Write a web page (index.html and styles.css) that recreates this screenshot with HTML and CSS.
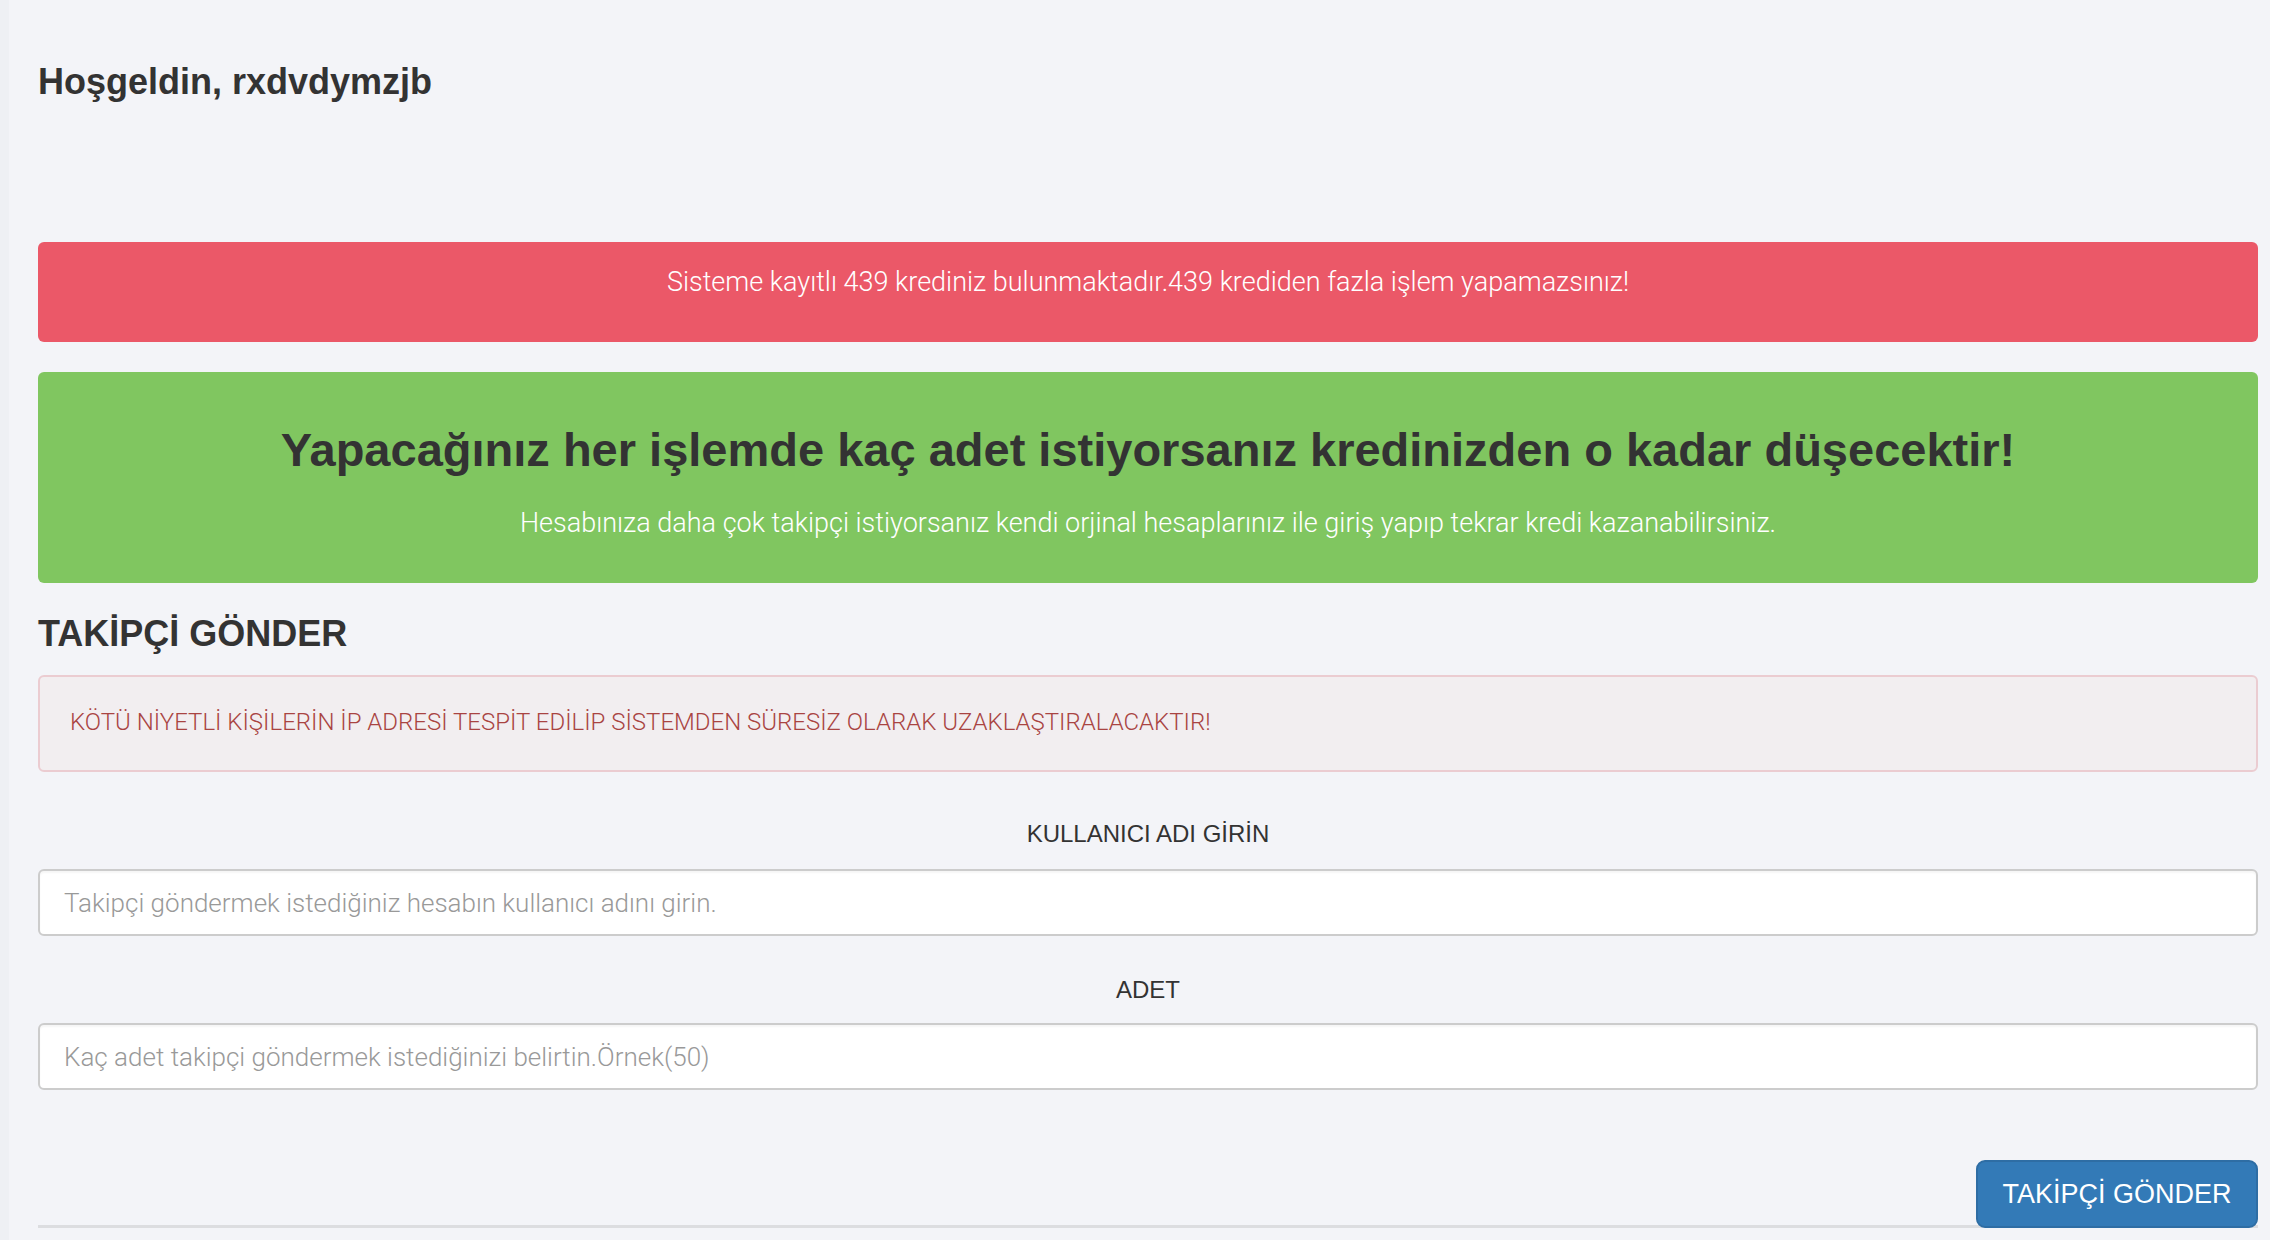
FILE: index.html
```html
<!DOCTYPE html>
<html lang="tr">
<head>
<meta charset="utf-8">
<title>Takipçi Gönder</title>
<link rel="stylesheet" href="styles.css">
</head>
<body>
<div class="page">
  <h3 class="welcome">Hoşgeldin, rxdvdymzjb</h3>

  <div class="alert alert-red">
    <p>Sisteme kayıtlı 439 krediniz bulunmaktadır.439 krediden fazla işlem yapamazsınız!</p>
  </div>

  <div class="alert alert-green">
    <h2 class="green-title">Yapacağınız her işlemde kaç adet istiyorsanız kredinizden o kadar düşecektir!</h2>
    <p class="green-sub">Hesabınıza daha çok takipçi istiyorsanız kendi orjinal hesaplarınız ile giriş yapıp tekrar kredi kazanabilirsiniz.</p>
  </div>

  <h3 class="section-title">TAKİPÇİ GÖNDER</h3>

  <div class="alert alert-pink">KÖTÜ NİYETLİ KİŞİLERİN İP ADRESİ TESPİT EDİLİP SİSTEMDEN SÜRESİZ OLARAK UZAKLAŞTIRALACAKTIR!</div>

  <form class="send-form">
    <div class="field">
      <label class="field-label" for="u">KULLANICI ADI GİRİN</label>
      <input class="field-input" id="u" type="text" placeholder="Takipçi göndermek istediğiniz hesabın kullanıcı adını girin.">
    </div>
    <div class="field">
      <label class="field-label" for="a">ADET</label>
      <input class="field-input" id="a" type="text" placeholder="Kaç adet takipçi göndermek istediğinizi belirtin.Örnek(50)">
    </div>
    <div class="actions">
      <button class="btn-send" type="button">TAKİPÇİ GÖNDER</button>
    </div>
  </form>
</div>
</body>
</html>
```

FILE: styles.css
```css
* { box-sizing: border-box; }
html, body {
  margin: 0;
  padding: 0;
  background: #f3f4f8;
}
body {
  font-family: "Roboto", "Liberation Sans", Arial, sans-serif;
  font-weight: 300;
  color: #333;
  font-size: 27px;
  border-left: 9px solid #eef0f4;
  min-height: 1240px;
}
.page {
  padding: 62px 12px 0 29px;
}
.welcome {
  margin: 0;
  font-family: "Liberation Sans", Arial, sans-serif;
  font-weight: 700;
  font-size: 36px;
  line-height: 40px;
  color: #333;
}
.alert {
  border-radius: 6px;
}
.alert-red {
  margin-top: 140px;
  height: 100px;
  background: #eb5868;
  color: #fff;
  text-align: center;
  padding-top: 25px;
}
.alert-red p {
  margin: 0;
  line-height: 30px;
}
.alert-green {
  margin-top: 30px;
  height: 211px;
  background: #80c660;
  text-align: center;
  padding-top: 50px;
}
.green-title {
  margin: 0;
  font-family: "Liberation Sans", Arial, sans-serif;
  font-weight: 700;
  font-size: 47px;
  line-height: 56px;
  color: #333;
}
.green-sub {
  margin: 30px 0 0;
  line-height: 30px;
  color: #fff;
}
.section-title {
  margin: 31px 0 0;
  font-family: "Liberation Sans", Arial, sans-serif;
  font-weight: 700;
  font-size: 36px;
  line-height: 40px;
  color: #333;
}
.alert-pink {
  margin-top: 21px;
  height: 97px;
  background: #f2eef0;
  border: 2px solid #ebccd1;
  color: #a94442;
  padding: 30px 0 0 30px;
  font-size: 24px;
  line-height: 30px;
}
.send-form {
  margin: 0;
}
.field {
  display: flex;
  flex-direction: column;
}
.field-label {
  text-align: center;
  font-family: "Liberation Sans", Arial, sans-serif;
  font-weight: 400;
  font-size: 24px;
  line-height: 30px;
  color: #333;
  margin-top: 47px;
  margin-bottom: 20px;
}
.field + .field .field-label {
  margin-top: 39px;
  margin-bottom: 18px;
}
.field-input {
  height: 67px;
  width: 100%;
  border: 2px solid #ccc;
  border-radius: 6px;
  background: #fff;
  padding: 0 24px;
  font-family: inherit;
  font-weight: 300;
  font-size: 26px;
  color: #555;
  box-shadow: inset 0 2px 2px rgba(0,0,0,0.04);
}
.field-input::placeholder {
  color: #999;
}
.actions {
  margin-top: 70px;
  display: flex;
  justify-content: flex-end;
  border-bottom: 3px solid #dcdde0;
}
.btn-send {
  width: 282px;
  height: 68px;
  margin-bottom: -3px;
  background: #337ab7;
  border: 2px solid #2e6da4;
  border-radius: 9px;
  color: #fff;
  font-family: "Liberation Sans", Arial, sans-serif;
  font-weight: 400;
  font-size: 27px;
  padding: 0;
}
```
